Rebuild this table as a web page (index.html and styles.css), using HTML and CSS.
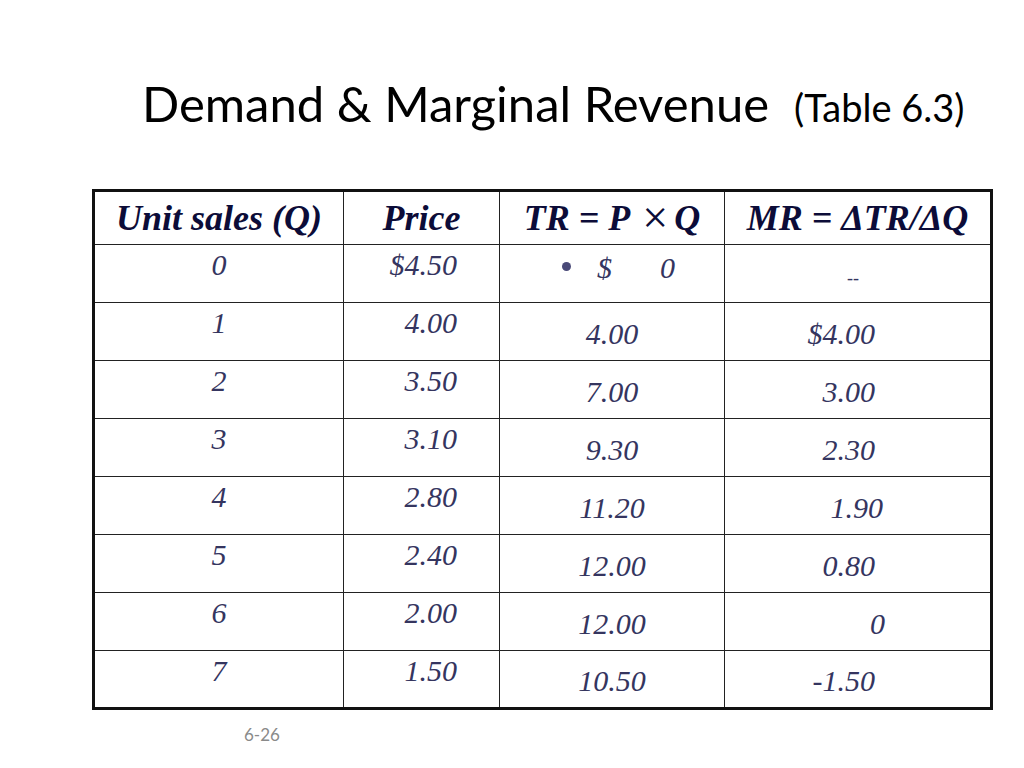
FILE: index.html
```html
<!DOCTYPE html>
<html>
<head>
<meta charset="utf-8">
<link rel="stylesheet" href="styles.css">
</head>
<body>
<div class="slide">
  <header class="title-row">
    <h1 class="title">Demand &amp; Marginal Revenue</h1>
    <span class="subtitle">(Table 6.3)</span>
  </header>
  <table class="data">
    <colgroup>
      <col class="c1"><col class="c2"><col class="c3"><col class="c4">
    </colgroup>
    <thead>
      <tr>
        <th>Unit sales (Q)</th>
        <th>Price</th>
        <th>TR = P<span class="times">&#xD7;</span>Q</th>
        <th>MR = &#x394;TR/&#x394;Q</th>
      </tr>
    </thead>
    <tbody>
      <tr class="first">
        <td class="q">0</td><td class="p">$4.50</td>
        <td class="tr"><span class="dot"></span><span class="dollar">$</span>0</td>
        <td class="mr dash">--</td>
      </tr>
      <tr><td class="q">1</td><td class="p">4.00</td><td class="tr">4.00</td><td class="mr">$4.00</td></tr>
      <tr><td class="q">2</td><td class="p">3.50</td><td class="tr">7.00</td><td class="mr">3.00</td></tr>
      <tr><td class="q">3</td><td class="p">3.10</td><td class="tr">9.30</td><td class="mr">2.30</td></tr>
      <tr><td class="q">4</td><td class="p">2.80</td><td class="tr">11.20</td><td class="mr shift8">1.90</td></tr>
      <tr><td class="q">5</td><td class="p">2.40</td><td class="tr">12.00</td><td class="mr">0.80</td></tr>
      <tr><td class="q">6</td><td class="p">2.00</td><td class="tr">12.00</td><td class="mr shift10">0</td></tr>
      <tr><td class="q">7</td><td class="p">1.50</td><td class="tr">10.50</td><td class="mr">-1.50</td></tr>
    </tbody>
  </table>
  <footer class="page-num">6-26</footer>
</div>
</body>
</html>
```

FILE: styles.css
```css
html, body {
  margin: 0;
  padding: 0;
  background: #ffffff;
}
.slide {
  width: 1024px;
  height: 768px;
  overflow: hidden;
}
.title-row {
  display: flex;
  align-items: baseline;
  padding: 74px 0 0 142px;
  font-family: Lato, "Open Sans", sans-serif;
  color: #000;
}
.title {
  margin: 0;
  font-weight: 400;
  font-size: 49px;
  line-height: 59px;
}
.subtitle {
  font-size: 38px;
  margin-left: 25px;
}
.data {
  margin: 56px 0 0 92px;
  width: 898px;
  border-collapse: collapse;
  border: 3px solid #111;
  table-layout: fixed;
  font-family: "Liberation Serif", "Times New Roman", serif;
  font-style: italic;
}
.c1 { width: 250px; }
.c2 { width: 156px; }
.c3 { width: 225px; }
.c4 { width: 267px; }
.data th, .data td {
  border: 1.5px solid #222;
  padding: 0;
}
.data th {
  height: 52px;
  font-weight: 700;
  font-size: 36px;
  color: #0c0c38;
  text-align: center;
  vertical-align: middle;
}
.times {
  display: inline-block;
  font-weight: 400;
  font-style: normal;
  font-size: 46px;
  line-height: 0;
  margin: 0 6px 0 12px;
  vertical-align: -3px;
}
.data td {
  height: 58px;
  font-size: 30px;
  color: #35355f;
  box-sizing: border-box;
}
.data td.q {
  text-align: center;
  vertical-align: top;
  padding-top: 3px;
}
.data td.p {
  text-align: right;
  vertical-align: top;
  padding-top: 3px;
  padding-right: 42px;
}
.data td.tr {
  text-align: center;
  vertical-align: middle;
  padding-top: 4px;
}
.data td.mr {
  text-align: right;
  vertical-align: middle;
  padding-right: 115px;
  padding-top: 4px;
}
.data td.mr.shift8 { padding-right: 107px; }
.data td.mr.shift10 { padding-right: 105px; }
.data tr.first td.tr {
  vertical-align: top;
  padding-top: 6px;
  text-align: left;
  padding-left: 62px;
}
.data tr.first td.mr.dash {
  font-size: 18px;
  padding-right: 131px;
  padding-top: 10px;
}
.dot {
  display: inline-block;
  width: 9px;
  height: 9px;
  border-radius: 50%;
  background: #4a4a78;
  margin-right: 26px;
  vertical-align: 7px;
}
.dollar {
  margin-right: 48px;
}
.page-num {
  font-family: Lato, "Open Sans", sans-serif;
  font-size: 17px;
  color: #8a8a8a;
  padding: 14px 0 0 244px;
}
```
